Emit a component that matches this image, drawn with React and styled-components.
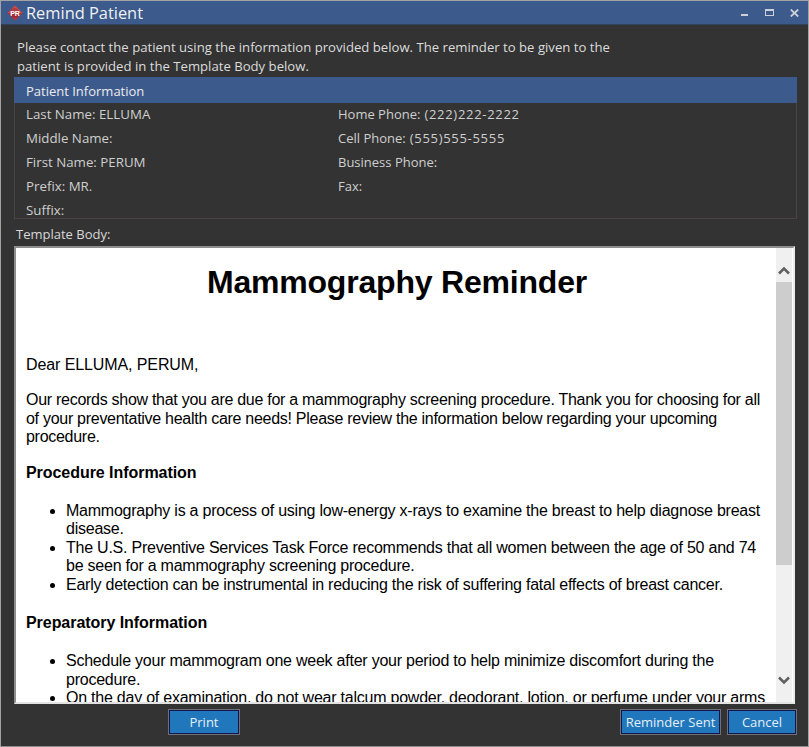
import React from "react";
import styled, { createGlobalStyle } from "styled-components";

const GlobalStyle = createGlobalStyle`
  html, body {
    margin: 0;
    padding: 0;
    background: #333333;
  }
  * {
    box-sizing: border-box;
  }
`;

const Window = styled.div`
  display: flex;
  flex-direction: column;
  width: 809px;
  height: 747px;
  overflow: hidden;
  background: #333333;
  border: 1px solid #a3a3a3;
  border-bottom-color: #8c8c8c;
  font-family: "Open Sans", "Noto Sans", sans-serif;
  color: #d8d8d8;
`;

const TitleBar = styled.div`
  display: flex;
  align-items: center;
  flex: none;
  height: 24px;
  padding: 0 0 0 6px;
  background: #3c5a8c;
  border-bottom: 1px solid #33415e;
`;

const TitleText = styled.span`
  margin-left: 3px;
  font-size: 16.4px;
  color: #f0f0f0;
  white-space: nowrap;
`;

const WindowControls = styled.div`
  display: flex;
  align-items: center;
  gap: 16px;
  margin-left: auto;
  padding-right: 9px;
`;

const Intro = styled.p`
  margin: 13px 0 0 16px;
  width: 600px;
  font-size: 13.15px;
  line-height: 19px;
  color: #dcdcdc;
`;

const Panel = styled.section`
  flex: none;
  margin: 1px 11px 0 13px;
  height: 142px;
  border: 1px solid #4a4246;
  border-top: 0;
`;

const PanelHeader = styled.div`
  display: flex;
  align-items: center;
  height: 26px;
  margin: 0 -1px;
  padding: 1px 0 0 12px;
  background: #3c5a8c;
  font-size: 13px;
  color: #ececec;
`;

const InfoGrid = styled.div`
  display: grid;
  grid-template-columns: 312px 1fr;
  grid-auto-rows: 24px;
  padding: 0 0 0 11px;
`;

const InfoItem = styled.div`
  display: flex;
  align-items: center;
  gap: 4px;
  height: 22px;
  font-size: ${(props) => (props.$phone ? "13px" : "13.3px")};
  color: #cfcfcf;
  white-space: nowrap;
`;

const PhoneNumber = styled.span`
  letter-spacing: 0.7px;
`;

const FieldLabel = styled.div`
  flex: none;
  height: 20px;
  margin: 5px 0 0 15px;
  font-size: 13px;
  line-height: 20px;
  color: #d8d8d8;
`;

const BodyFrame = styled.div`
  display: flex;
  flex: none;
  height: 458px;
  margin: 2px 13px 0 13px;
  background: #ffffff;
  border: 2px solid #8e8e8e;
  border-right-color: #ececec;
  border-bottom-color: #e2e2e2;
  overflow: hidden;
`;

const Document = styled.div`
  flex: 1;
  min-width: 0;
  padding: 0 8px 0 10px;
  font-family: "Liberation Sans", Arial, sans-serif;
  font-size: 16px;
  line-height: 18.4px;
  letter-spacing: -0.235px;
  color: #000000;

  h1 {
    margin: 16px 0 0;
    font-size: 32px;
    line-height: 36px;
    font-weight: 700;
    letter-spacing: -0.2px;
    text-align: center;
  }

  h2 {
    margin: 0 0 20px;
    font-size: 16px;
    line-height: 18.4px;
    font-weight: 700;
    letter-spacing: -0.05px;
  }

  p {
    margin: 0 0 17px;
    letter-spacing: -0.28px;
  }

  ul {
    margin: 0 0 20px;
    padding-left: 40px;
  }
`;

const Greeting = styled.p`
  margin-top: 56px !important;
  letter-spacing: -0.1px !important;
`;

const ScrollBar = styled.div`
  display: flex;
  flex-direction: column;
  flex: none;
  width: 16px;
  margin-right: 1px;
  background: #f0f0f0;
`;

const ScrollArrow = styled.div`
  display: flex;
  align-items: center;
  justify-content: center;
  flex: none;
  height: 34px;
  padding: ${(props) => (props.$down ? "0 0 10px" : "10px 0 0")};
`;

const ScrollThumb = styled.div`
  flex: none;
  height: 283px;
  background: #cdcdcd;
`;

const ScrollTrack = styled.div`
  flex: 1;
`;

const Footer = styled.div`
  display: flex;
  align-items: flex-start;
  flex: 1;
  padding: 5px 0 0 167px;
`;

const ActionButton = styled.button`
  width: ${(props) => props.$width}px;
  height: 26px;
  margin-left: ${(props) => props.$gap || 0}px;
  padding: 0;
  background: #2077bc;
  border: 1px solid #6f6f78;
  outline: 1px solid #15164e;
  outline-offset: -2px;
  font-family: "Open Sans", "Noto Sans", sans-serif;
  font-size: 13px;
  color: #e6eef6;
`;

const patientRows = [
  ["Last Name: ELLUMA", "Home Phone:", "(222)222-2222"],
  ["Middle Name:", "Cell Phone:", "(555)555-5555"],
  ["First Name: PERUM", "Business Phone:"],
  ["Prefix: MR.", "Fax:"],
  ["Suffix:", ""],
];

const AppIcon = () => (
  <svg width="16" height="16" viewBox="0 0 16 16">
    <path d="M8 0.5 15.5 8 8 15.5 0.5 8Z" fill="#b5333b" />
    <path d="M8 0.5 15.5 8H0.5Z" fill="#cf4b4f" />
    <circle cx="7.5" cy="8" r="5" fill="#7d1f28" opacity="0.35" />
    <text x="8" y="10.5" textAnchor="middle" fontSize="7" fontWeight="700" fontFamily="Liberation Sans" fill="#ffffff">
      PR
    </text>
  </svg>
);

const MinimizeIcon = () => (
  <svg width="9" height="9" viewBox="0 0 9 9">
    <rect x="1" y="6" width="7" height="2" fill="#ccd0d8" />
  </svg>
);

const MaximizeIcon = () => (
  <svg width="9" height="7" viewBox="0 0 9 7">
    <rect x="0.5" y="0.5" width="8" height="6" fill="none" stroke="#ccd0d8" />
    <rect x="0" y="0" width="9" height="2" fill="#ccd0d8" />
  </svg>
);

const CloseIcon = () => (
  <svg width="9" height="8" viewBox="0 0 9 8">
    <path d="M0.8 0.5 8.2 7.5M8.2 0.5 0.8 7.5" stroke="#ccd0d8" strokeWidth="1.8" fill="none" />
  </svg>
);

const Chevron = ({ down }) => (
  <svg width="12" height="9" viewBox="0 0 12 9">
    <path d={down ? "M1 1.5 6 6.5 11 1.5" : "M1 7.5 6 2.5 11 7.5"} fill="none" stroke="#606060" strokeWidth="2.6" />
  </svg>
);

export default function App() {
  return (
    <>
      <GlobalStyle />
      <Window>
        <TitleBar>
          <AppIcon />
          <TitleText>Remind Patient</TitleText>
          <WindowControls>
            <MinimizeIcon />
            <MaximizeIcon />
            <CloseIcon />
          </WindowControls>
        </TitleBar>
        <Intro>
          Please contact the patient using the information provided below. The reminder to be given to the patient is
          provided in the Template Body below.
        </Intro>
        <Panel>
          <PanelHeader>Patient Information</PanelHeader>
          <InfoGrid>
            {patientRows.map(([left, right, number]) => (
              <React.Fragment key={left}>
                <InfoItem>{left}</InfoItem>
                <InfoItem $phone>
                  {right}
                  {number && <PhoneNumber>{number}</PhoneNumber>}
                </InfoItem>
              </React.Fragment>
            ))}
          </InfoGrid>
        </Panel>
        <FieldLabel>Template Body:</FieldLabel>
        <BodyFrame>
          <Document>
            <h1>Mammography Reminder</h1>
            <Greeting>Dear ELLUMA, PERUM,</Greeting>
            <p>
              Our records show that you are due for a mammography screening procedure. Thank you for choosing for all
              of your preventative health care needs! Please review the information below regarding your upcoming
              procedure.
            </p>
            <h2>Procedure Information</h2>
            <ul>
              <li>
                Mammography is a process of using low-energy x-rays to examine the breast to help diagnose breast
                disease.
              </li>
              <li>
                The U.S. Preventive Services Task Force recommends that all women between the age of 50 and 74 be seen
                for a mammography screening procedure.
              </li>
              <li>Early detection can be instrumental in reducing the risk of suffering fatal effects of breast cancer.</li>
            </ul>
            <h2>Preparatory Information</h2>
            <ul>
              <li>Schedule your mammogram one week after your period to help minimize discomfort during the procedure.</li>
              <li>On the day of examination, do not wear talcum powder, deodorant, lotion, or perfume under your arms</li>
            </ul>
          </Document>
          <ScrollBar>
            <ScrollArrow>
              <Chevron />
            </ScrollArrow>
            <ScrollThumb />
            <ScrollTrack />
            <ScrollArrow $down>
              <Chevron down />
            </ScrollArrow>
          </ScrollBar>
        </BodyFrame>
        <Footer>
          <ActionButton $width={72}>Print</ActionButton>
          <ActionButton $width={101} $gap={380}>
            Reminder Sent
          </ActionButton>
          <ActionButton $width={70} $gap={6}>
            Cancel
          </ActionButton>
        </Footer>
      </Window>
    </>
  );
}
